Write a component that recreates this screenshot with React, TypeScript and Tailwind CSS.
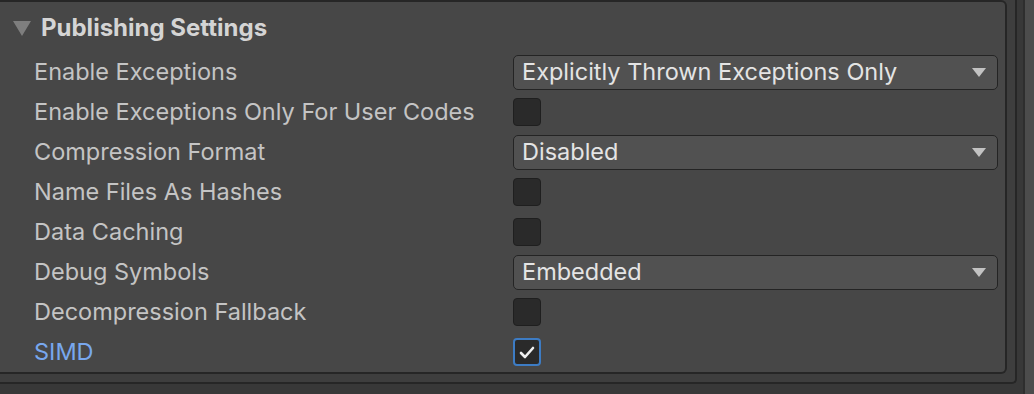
import React from "react";

type Row =
  | { label: string; kind: "dropdown"; value: string }
  | { label: string; kind: "check"; checked: boolean; blue?: boolean };

const rows: Row[] = [
  { label: "Enable Exceptions", kind: "dropdown", value: "Explicitly Thrown Exceptions Only" },
  { label: "Enable Exceptions Only For User Codes", kind: "check", checked: false },
  { label: "Compression Format", kind: "dropdown", value: "Disabled" },
  { label: "Name Files As Hashes", kind: "check", checked: false },
  { label: "Data Caching", kind: "check", checked: false },
  { label: "Debug Symbols", kind: "dropdown", value: "Embedded" },
  { label: "Decompression Fallback", kind: "check", checked: false },
  { label: "SIMD", kind: "check", checked: true, blue: true },
];

function Dropdown({ value }: { value: string }) {
  return (
    <div className="flex h-[35px] w-[485px] items-center justify-between rounded-[5px] border border-[#242424] bg-[#515151] pl-[8px] pr-[11px] text-[#e4e4e4]">
      <span>{value}</span>
      <svg width="14" height="9" viewBox="0 0 14 9">
        <polygon points="0,0 14,0 7,9" fill="#c2c2c2" />
      </svg>
    </div>
  );
}

function Check({ checked }: { checked: boolean }) {
  return (
    <div
      className={
        checked
          ? "flex h-[28px] w-[28px] items-center justify-center rounded-[4px] border-2 border-[#3d7cc4] bg-[#2a2a2a]"
          : "h-[28px] w-[28px] rounded-[4px] border border-[#1f1f1f] bg-[#2a2a2a]"
      }
    >
      {checked && (
        <svg width="16" height="13" viewBox="0 0 16 13">
          <path d="M2 7 L6 11 L14 2" stroke="#f0f0f0" strokeWidth="2.6" fill="none" strokeLinecap="round" strokeLinejoin="round" />
        </svg>
      )}
    </div>
  );
}

export default function App() {
  return (
    <div
      className="flex h-[394px] w-[1034px] overflow-hidden bg-[#383838]"
      style={{ fontFamily: "Inter, 'Noto Sans', sans-serif" }}
    >
      <div className="h-[384px] w-[1017px] rounded-br-[5px] border-b-2 border-r-2 border-[#262626] bg-[#3e3e3e] pb-[8px] pr-[8px]">
        <div className="h-[374px] w-[1007px] rounded-r-[6px] border-y-2 border-r-2 border-[#262626] bg-[#474747] pt-[6px]">
          <div className="flex h-[40px] items-center text-[24px] font-bold text-[#d4d4d4]">
            <svg width="18" height="15" viewBox="0 0 18 15" className="ml-[13px] mr-[10px]">
              <polygon points="0,0 18,0 9,15" fill="#7e7e7e" />
            </svg>
            <span>Publishing Settings</span>
          </div>
          <div className="mt-[4px] flex flex-col text-[23.5px]">
            {rows.map((r) => (
              <div key={r.label} className="flex h-[40px] items-center">
                <div
                  className={
                    "w-[513px] pl-[34px] " +
                    (r.kind === "check" && r.blue ? "text-[#78a7ee]" : "text-[#c4c4c4]")
                  }
                >
                  {r.label}
                </div>
                {r.kind === "dropdown" ? <Dropdown value={r.value} /> : <Check checked={r.checked} />}
              </div>
            ))}
          </div>
        </div>
      </div>
      <div className="flex h-full flex-1">
        <div className="w-[8px] border-r-2 border-[#2e2e2e] bg-[#383838]" />
        <div className="flex-1 bg-[#4c4c4c]" />
      </div>
    </div>
  );
}
